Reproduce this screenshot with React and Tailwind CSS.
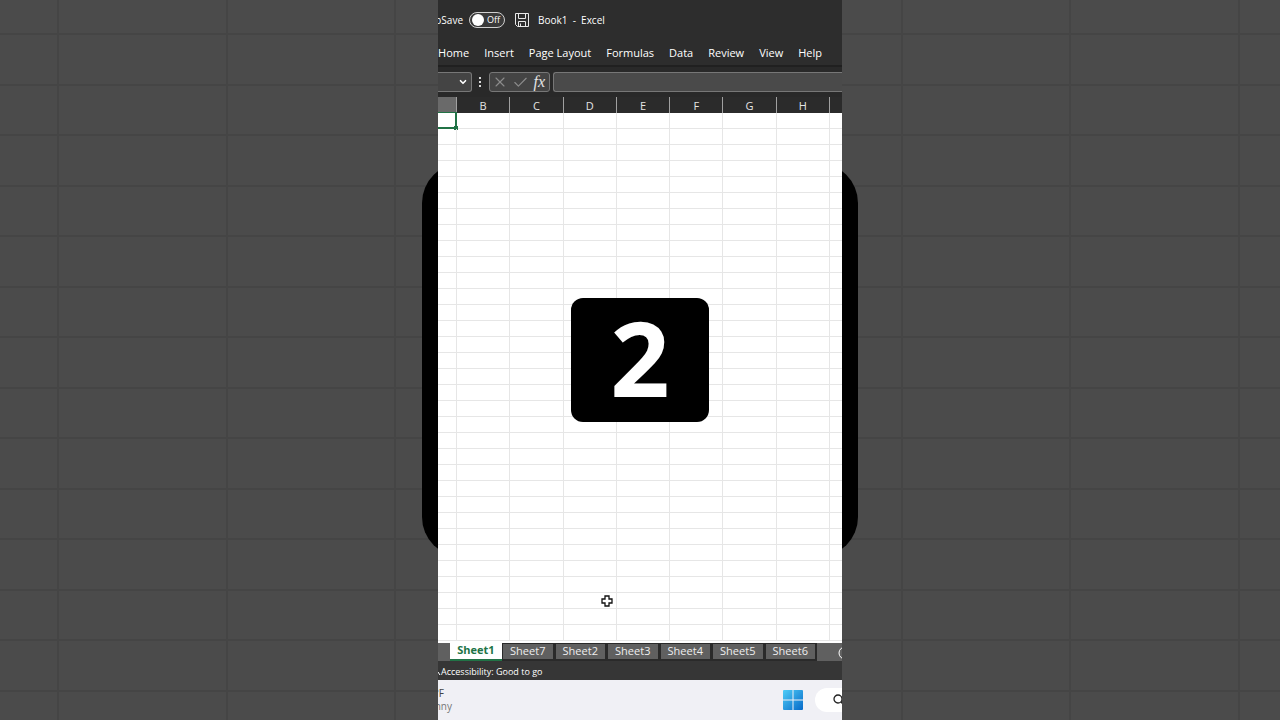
import { Check, ChevronDown, X } from 'lucide-react';

const menu = ['Home', 'Insert', 'Page Layout', 'Formulas', 'Data', 'Review', 'View', 'Help'];
const columns = ['B', 'C', 'D', 'E', 'F', 'G', 'H'];
const sheets = ['Sheet7', 'Sheet2', 'Sheet3', 'Sheet4', 'Sheet5', 'Sheet6'];
const rows = Array.from({ length: 33 }, (_, i) => i + 1);

function Backdrop() {
    return (
        <div className="absolute inset-0 bg-[#4b4b4b]">
            <div className="absolute inset-0 flex pl-[57px] pr-10">
                {Array.from({ length: 7 }, (_, i) => (
                    <div key={i} className="flex-1 border-l-2 border-[#454545] last:border-r-2"></div>
                ))}
            </div>
            <div className="absolute inset-0 flex flex-col pt-[33px] pb-7">
                {Array.from({ length: 13 }, (_, i) => (
                    <div key={i} className="flex-1 border-t-2 border-[#454545] last:border-b-2"></div>
                ))}
            </div>
            <div className="absolute inset-0 flex items-center justify-center">
                <div className="h-[394px] w-[436px] rounded-[40px] bg-black"></div>
            </div>
        </div>
    )
}

function TitleBar() {
    return (
        <header className="flex h-10 shrink-0 items-center text-[10px] text-white">
            <label htmlFor="autosave" className="flex w-[25px] shrink-0 justify-end">AutoSave</label>
            <span className="relative ml-1.5 flex h-4 w-9 shrink-0 items-center justify-between rounded-full border border-[#d0d0d0] bg-[#3a3a3a] pl-0.5 pr-1 text-[9px]">
                <input id="autosave" type="checkbox" role="switch" className="absolute inset-0 appearance-none rounded-full" />
                <span className="size-3 rounded-full bg-white"></span>
                <span>Off</span>
            </span>
            <button aria-label="Save" className="ml-2.5 shrink-0">
                <svg width="14" height="14" viewBox="0 0 14 14" fill="none" stroke="#e8e8e8" strokeWidth="1">
                    <path d="M.5 .5h13v13H2.5l-2-2z" />
                    <path d="M3.5 .5v5h7v-5M3.5 13.5v-5h7v5M5.5 13.5v-3" />
                </svg>
            </button>
            <span className="ml-[9px] whitespace-pre">Book1  -  Excel</span>
        </header>
    )
}

function FormulaBar() {
    return (
        <div className="flex h-8 shrink-0 items-center border-t-2 border-[#202020] bg-[#292929]">
            <button aria-label="Name Box" className="flex h-5 w-[34px] shrink-0 items-center justify-end rounded-r-[3px] border border-l-0 border-[#777777] bg-[#444444] pr-[3px] text-white">
                <ChevronDown size={10} strokeWidth={4} />
            </button>
            <svg className="mx-[7px] shrink-0" width="3" height="10" viewBox="0 0 3 10" fill="#d8d8d8">
                <rect width="2" height="2" y="0" />
                <rect width="2" height="2" y="4" />
                <rect width="2" height="2" y="8" />
            </svg>
            <div className="flex h-5 w-[61px] shrink-0 items-center justify-between rounded-[3px] border border-[#777777] bg-[#444444] px-0.5">
                <button aria-label="Cancel" className="text-[#8c8c8c]"><X size={16} strokeWidth={1.6} /></button>
                <button aria-label="Enter" className="text-[#8c8c8c]"><Check size={17} strokeWidth={1.6} /></button>
                <button aria-label="Insert Function" className="pr-0.5 font-['Liberation_Serif',serif] text-base leading-4 text-[#e4e4e4] italic">fx</button>
            </div>
            <input aria-label="Formula Bar" className="ml-[3px] h-5 min-w-0 flex-1 rounded-l-[3px] border border-r-0 border-[#777777] bg-[#4a4a4a]" />
        </div>
    )
}

function Grid() {
    return (
        <main className="relative min-h-0 flex-1 overflow-hidden bg-white">
            <table className="w-full table-fixed border-separate border-spacing-0">
                <thead>
                    <tr className="h-4 bg-[#2b2b2b] text-[11px] leading-[15px] text-[#e4e4e4]">
                        <th aria-label="A" className="w-[19px] border-r border-b border-r-[#a0a0a0] border-b-[#217346] bg-[#6a6a6a] p-0"></th>
                        {columns.map((c) => (
                            <th key={c} className="border-r border-[#a0a0a0] p-0 font-normal">{c}</th>
                        ))}
                        <th aria-label="I" className="w-3 p-0"></th>
                    </tr>
                </thead>
                <tbody>
                    {rows.map((r) => (
                        <tr key={r} className="h-4">
                            <td className="relative border-r border-b border-[#e6e6e6] p-0">
                                {r === 1 && (
                                    <>
                                        <span className="absolute -inset-y-px right-[-1px] left-0 border-r-2 border-b-2 border-[#217346]"></span>
                                        <span className="absolute -right-0.5 -bottom-0.5 size-1 bg-[#217346]"></span>
                                    </>
                                )}
                            </td>
                            {columns.map((c) => (
                                <td key={c} className="border-r border-b border-[#e6e6e6] p-0"></td>
                            ))}
                            <td className="border-b border-[#e6e6e6] p-0"></td>
                        </tr>
                    ))}
                </tbody>
            </table>
            {/* cell cursor */}
            <svg className="absolute top-[498px] left-[163px]" width="12" height="12" viewBox="0 0 12 12">
                <path d="M4 1h4v3h3v4H8v3H4V8H1V4h3z" fill="#fff" stroke="#111" strokeWidth="1.3" />
            </svg>
        </main>
    )
}

function SheetTabs() {
    return (
        <div className="flex h-[18px] shrink-0 overflow-hidden bg-[#606060] text-[11px] leading-[14px]">
            <div className="w-3 shrink-0"></div>
            <button className="w-[52px] shrink-0 border-b-2 border-[#217346] bg-white pb-0.5 font-bold text-[#217346]">Sheet1</button>
            <div className="flex w-[315px] shrink-0">
                {sheets.map((s) => (
                    <button key={s} className="min-w-0 flex-1 border-t border-r-2 border-b-2 border-l border-[#2a2a2a] bg-[#606060] pb-0.5 text-[#eeeeee]">{s}</button>
                ))}
            </div>
            <button aria-label="New sheet" className="ml-[21px] shrink-0 pt-0.5">
                <svg width="14" height="14" viewBox="0 0 14 14" fill="none" stroke="#fff">
                    <circle cx="7" cy="7" r="6" />
                    <path d="M7 4v6M4 7h6" />
                </svg>
            </button>
        </div>
    )
}

function Taskbar() {
    return (
        <footer className="flex h-10 shrink-0 items-center overflow-hidden bg-[#f0f0f5]">
            <div className="flex w-3.5 shrink-0 flex-col items-end text-[10px] leading-[13px]">
                <span className="pr-2 text-[#444444]">86°F</span>
                <span className="text-[#777777]">Sunny</span>
            </div>
            <button aria-label="Start" className="ml-auto shrink-0">
                <svg width="20" height="20" viewBox="0 0 20 20">
                    <defs>
                        <linearGradient id="win" x1="0" y1="0" x2="20" y2="20" gradientUnits="userSpaceOnUse">
                            <stop stopColor="#4fcdf7" />
                            <stop offset="1" stopColor="#0669c8" />
                        </linearGradient>
                    </defs>
                    <path d="M0 1q0-1 1-1h8.500v9.500H0zM10.500 0H19q1 0 1 1v8.500h-9.500zM0 10.500h9.500V20H1q-1 0-1-1zM10.500 10.500H20V19q0 1-1 1h-8.500z" fill="url(#win)" />
                </svg>
            </button>
            <button aria-label="Search" className="ml-3 flex h-6 w-[27px] shrink-0 items-center justify-end rounded-l-full bg-white">
                <svg width="9" height="12" viewBox="0 0 9 12" fill="none" stroke="#222" strokeWidth="1.300">
                    <circle cx="5" cy="5" r="4" />
                    <path d="M8 8l3 3" />
                </svg>
            </button>
        </footer>
    )
}

function App() {
    return (
        <div className="relative flex h-screen justify-center overflow-hidden font-['Open_Sans','Noto_Sans',sans-serif]">
            <Backdrop />
            <div className="relative flex aspect-[101/180] h-full flex-col overflow-hidden bg-[#2d2d2d]">
                <TitleBar />
                <nav className="flex h-[25px] shrink-0 items-center justify-end gap-[15px] pt-0.5 pr-5 text-[11px] whitespace-nowrap text-white">
                    {menu.map((m) => (
                        <button key={m}>{m}</button>
                    ))}
                </nav>
                <FormulaBar />
                <Grid />
                <SheetTabs />
                <div className="flex h-[19px] shrink-0 items-center bg-[#363636] pt-0.5 text-[9px] text-white">
                    <svg width="3" height="8" viewBox="0 0 3 8" fill="none" stroke="#fff">
                        <path d="M0 4l2 3" />
                    </svg>
                    <span>Accessibility: Good to go</span>
                </div>
                <Taskbar />
                <div className="absolute inset-0 flex items-center justify-center">
                    <div className="flex h-[124px] w-[138px] items-center justify-center rounded-xl bg-black pb-1.5 text-[104px] leading-none font-bold text-white">2</div>
                </div>
            </div>
        </div>
    )
}

export default App;
